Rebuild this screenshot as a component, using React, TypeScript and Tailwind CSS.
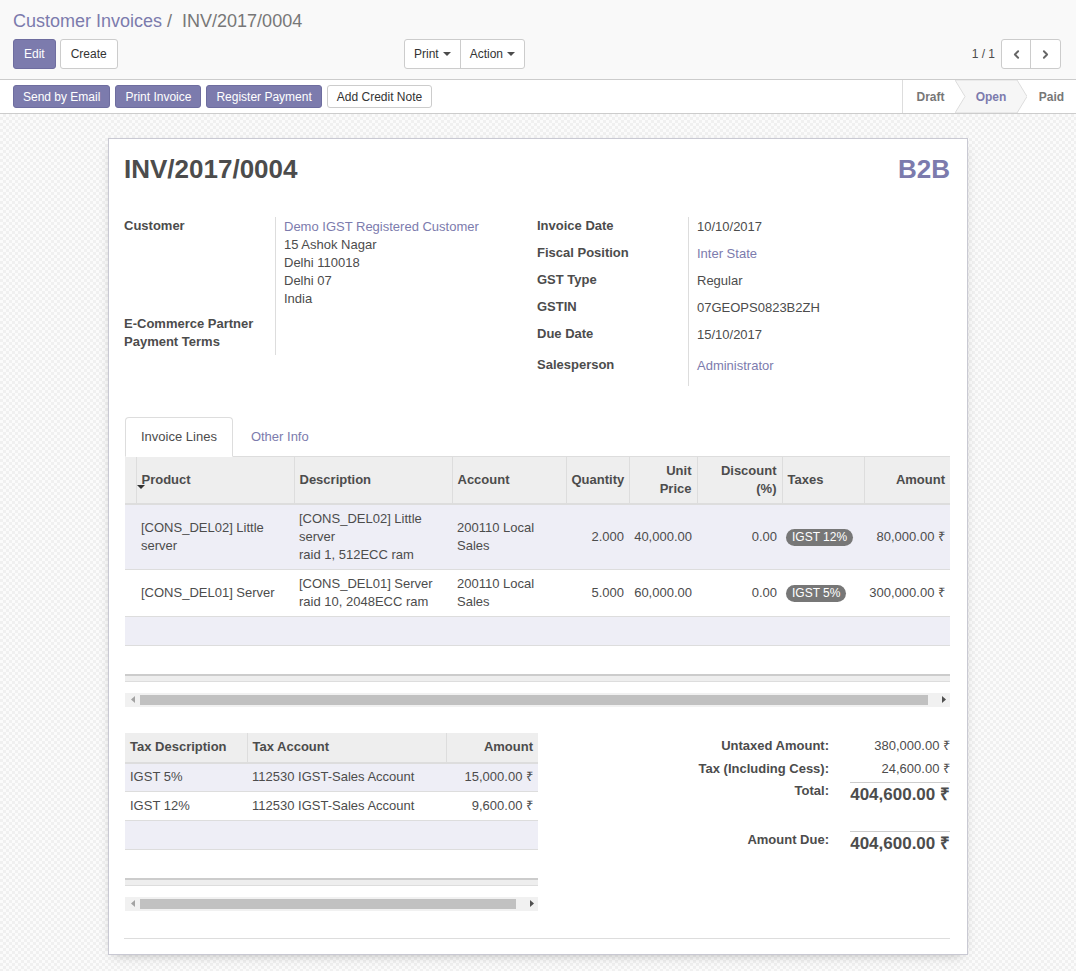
import { ChevronLeft, ChevronRight } from "lucide-react";

interface InvoiceLine {
  product: string[];
  description: string[];
  account: string[];
  quantity: string;
  price: string;
  discount: string;
  tax: string;
  amount: string;
}

const invoiceLines: InvoiceLine[] = [
  {
    product: ["[CONS_DEL02] Little", "server"],
    description: ["[CONS_DEL02] Little", "server", "raid 1, 512ECC ram"],
    account: ["200110 Local", "Sales"],
    quantity: "2.000",
    price: "40,000.00",
    discount: "0.00",
    tax: "IGST 12%",
    amount: "80,000.00 ₹",
  },
  {
    product: ["[CONS_DEL01] Server"],
    description: ["[CONS_DEL01] Server", "raid 10, 2048ECC ram"],
    account: ["200110 Local", "Sales"],
    quantity: "5.000",
    price: "60,000.00",
    discount: "0.00",
    tax: "IGST 5%",
    amount: "300,000.00 ₹",
  },
];

const taxLines = [
  { name: "IGST 5%", account: "112530 IGST-Sales Account", amount: "15,000.00 ₹" },
  { name: "IGST 12%", account: "112530 IGST-Sales Account", amount: "9,600.00 ₹" },
];

const Lines = ({ items }: { items: string[] }) => (
  <>
    {items.map((t, i) => (
      <div key={i}>{t}</div>
    ))}
  </>
);

const Caret = () => (
  <svg width="8" height="4" viewBox="0 0 8 4" className="ml-[4px] inline-block">
    <path d="M0 0 L8 0 L4 4 Z" fill="#4c4c4c" />
  </svg>
);

const Scrollbar = () => (
  <div className="h-[14px] bg-[#f1f1f1] flex items-center">
    <div className="w-[15px] flex justify-center">
      <svg width="4" height="7" viewBox="0 0 4 7">
        <path d="M4 0 L0 3.5 L4 7 Z" fill="#a3a3a3" />
      </svg>
    </div>
    <div className="flex-1 h-[10px] bg-[#c1c1c1]" />
    <div className="w-[22px] flex justify-end pr-[4px]">
      <svg width="4" height="7" viewBox="0 0 4 7">
        <path d="M0 0 L4 3.5 L0 7 Z" fill="#505050" />
      </svg>
    </div>
  </div>
);

const TableFoot = () => (
  <div className="h-[8px] bg-[#eeeeee] border-t-2 border-[#cccccc] border-b border-b-[#dddddd]" />
);

const App = () => {
  return (
    <div className="min-h-screen font-['Liberation_Sans',Arial,sans-serif] text-[13px] text-[#4c4c4c] bg-[repeating-conic-gradient(#f0f0f0_0%_25%,#fbfbfb_0%_50%)] bg-[length:6px_6px]">
      {/* control panel */}
      <div className="bg-[#f9f9f9] border-b border-[#cccccc] pl-[13px] pr-[15px] pt-[9px] pb-[10px]">
        <div className="text-[18px] leading-[24px]">
          <span className="text-[#7c7bad]">Customer Invoices</span>
          <span className="text-[#777777]"> /&nbsp; INV/2017/0004</span>
        </div>
        <div className="mt-[6px] flex items-center h-[30px]">
          <div className="w-[391px] flex gap-[4px]">
            <button className="h-[30px] px-[10px] bg-[#7c7bad] border border-[#6e6d9f] text-white text-[12px] rounded-[3px]">Edit</button>
            <button className="h-[30px] px-[10px] bg-white border border-[#cccccc] text-[#333333] text-[12px] rounded-[3px]">Create</button>
          </div>
          <div className="flex h-[30px] border border-[#cccccc] rounded-[3px] bg-white text-[12px] text-[#333333]">
            <button className="px-[9px] flex items-center border-r border-[#cccccc]">
              Print
              <Caret />
            </button>
            <button className="px-[9px] flex items-center">
              Action
              <Caret />
            </button>
          </div>
          <div className="ml-auto flex items-center">
            <span className="text-[12px] text-[#4c4c4c] mr-[6px]">1 / 1</span>
            <div className="flex h-[30px] border border-[#cccccc] rounded-[3px] bg-white">
              <button className="w-[29px] flex items-center justify-center border-r border-[#cccccc]">
                <ChevronLeft size={13} strokeWidth={3.5} color="#666666" />
              </button>
              <button className="w-[29px] flex items-center justify-center">
                <ChevronRight size={13} strokeWidth={3.5} color="#666666" />
              </button>
            </div>
          </div>
        </div>
      </div>

      {/* status bar */}
      <div className="bg-white border-b border-[#cccccc] h-[34px] flex items-center pl-[13px]">
        <div className="flex gap-[5px] text-[12px]">
          <button className="h-[23px] px-[9px] bg-[#7c7bad] border border-[#6e6d9f] text-white rounded-[3px]">Send by Email</button>
          <button className="h-[23px] px-[9px] bg-[#7c7bad] border border-[#6e6d9f] text-white rounded-[3px]">Print Invoice</button>
          <button className="h-[23px] px-[9px] bg-[#7c7bad] border border-[#6e6d9f] text-white rounded-[3px]">Register Payment</button>
          <button className="h-[23px] px-[9px] bg-white border border-[#cccccc] text-[#333333] rounded-[3px]">Add Credit Note</button>
        </div>
        <div className="ml-auto flex h-full border-l border-[#dddddd] text-[12px] font-bold">
          <div className="w-[52px] flex items-center justify-center pl-[3px] text-[#777777]">Draft</div>
          <div className="w-[72px] relative flex items-center justify-center text-[#7c7bad]">
            <svg width="72" height="33" viewBox="0 0 72 33" className="absolute left-0 top-0">
              <path d="M0 0 L62 0 L72 16.5 L62 33 L0 33 L10 16.5 Z" fill="#f6f6f6" stroke="#dddddd" strokeWidth="1" />
            </svg>
            <span className="relative">Open</span>
          </div>
          <div className="w-[49px] flex items-center justify-center text-[#777777]">Paid</div>
        </div>
      </div>

      {/* sheet */}
      <div className="pt-[24px] pb-[18px]">
        <div className="mx-auto w-[860px] bg-white border border-[#c9c9d3] shadow-[0_4px_12px_-6px_rgba(0,0,0,0.35)] pl-[15px] pr-[17px] pt-[15px] pb-[15px]">
          <div className="flex items-center justify-between">
            <h1 className="text-[26px] leading-[31px] font-bold text-[#4c4c4c]">INV/2017/0004</h1>
            <div className="text-[26px] leading-[31px] font-bold text-[#7c7bad]">B2B</div>
          </div>

          {/* groups */}
          <div className="mt-[32px] grid grid-cols-2 leading-[18px]">
            <div className="grid grid-cols-[151px_1fr] self-start">
              <div className="font-bold pb-[8px]">Customer</div>
              <div className="border-l border-[#dddddd] pl-[8px] pt-[1px] pb-[7px]">
                <div className="text-[#7c7bad]">Demo IGST Registered Customer</div>
                <div>15 Ashok Nagar</div>
                <div>Delhi 110018</div>
                <div>Delhi 07</div>
                <div>India</div>
              </div>
              <div className="font-bold">E-Commerce Partner</div>
              <div className="border-l border-[#dddddd]" />
              <div className="font-bold">Payment Terms</div>
              <div className="border-l border-[#dddddd]" />
              <div className="h-[4px]" />
              <div className="border-l border-[#dddddd]" />
            </div>
            <div className="grid grid-cols-[151px_1fr] self-start">
              <div className="font-bold h-[27px]">Invoice Date</div>
              <div className="border-l border-[#dddddd] pl-[8px] pt-[1px]">10/10/2017</div>
              <div className="font-bold h-[27px]">Fiscal Position</div>
              <div className="border-l border-[#dddddd] pl-[8px] pt-[1px] text-[#7c7bad]">Inter State</div>
              <div className="font-bold h-[27px]">GST Type</div>
              <div className="border-l border-[#dddddd] pl-[8px] pt-[1px]">Regular</div>
              <div className="font-bold h-[27px]">GSTIN</div>
              <div className="border-l border-[#dddddd] pl-[8px] pt-[1px]">07GEOPS0823B2ZH</div>
              <div className="font-bold h-[31px]">Due Date</div>
              <div className="border-l border-[#dddddd] pl-[8px] pt-[1px]">15/10/2017</div>
              <div className="font-bold h-[30px]">Salesperson</div>
              <div className="border-l border-[#dddddd] pl-[8px] pt-[1px] text-[#7c7bad]">Administrator</div>
            </div>
          </div>

          {/* tabs */}
          <div className="mt-[31px] ml-[1px] flex border-b border-[#dddddd] h-[40px]">
            <div className="px-[15px] flex items-center border border-[#dddddd] border-b-white rounded-t-[4px] bg-white -mb-[1px]">
              Invoice Lines
            </div>
            <div className="ml-[3px] px-[15px] flex items-center text-[#7c7bad]">Other Info</div>
          </div>

          {/* invoice lines */}
          <div className="ml-[1px]">
            <table className="w-full table-fixed border-collapse leading-[18px]">
              <colgroup>
                <col className="w-[11px]" />
                <col className="w-[158px]" />
                <col className="w-[158px]" />
                <col className="w-[114px]" />
                <col className="w-[63px]" />
                <col className="w-[68px]" />
                <col className="w-[85px]" />
                <col className="w-[82px]" />
                <col className="w-[86px]" />
              </colgroup>
              <thead>
                <tr className="bg-[#eeeeee] h-[47px] border-b-2 border-[#dddddd] font-bold">
                  <th className="border-r border-[#dddddd]" />
                  <th className="text-left px-[5px] border-r border-[#dddddd]">
                    <span className="relative">
                      <svg width="8" height="4" viewBox="0 0 8 4" className="absolute -left-[5px] top-[13px]">
                        <path d="M0 0 L8 0 L4 4 Z" fill="#333333" />
                      </svg>
                      Product
                    </span>
                  </th>
                  <th className="text-left px-[5px] border-r border-[#dddddd]">Description</th>
                  <th className="text-left px-[5px] border-r border-[#dddddd]">Account</th>
                  <th className="text-right px-[5px] border-r border-[#dddddd]">Quantity</th>
                  <th className="text-right px-[5px] border-r border-[#dddddd]">
                    Unit
                    <br />
                    Price
                  </th>
                  <th className="text-right px-[5px] border-r border-[#dddddd]">
                    Discount
                    <br />
                    (%)
                  </th>
                  <th className="text-left px-[5px] border-r border-[#dddddd]">Taxes</th>
                  <th className="text-right px-[5px]">Amount</th>
                </tr>
              </thead>
              <tbody>
                {invoiceLines.map((line, i) => (
                  <tr key={i} className={i === 0 ? "bg-[#eeeef6] border-b border-[#dddddd]" : "bg-white border-b border-[#dddddd]"}>
                    <td />
                    <td className="px-[5px] py-[5px] align-middle">
                      <Lines items={line.product} />
                    </td>
                    <td className="px-[5px] py-[5px] align-middle">
                      <Lines items={line.description} />
                    </td>
                    <td className="px-[5px] py-[5px] align-middle">
                      <Lines items={line.account} />
                    </td>
                    <td className="px-[5px] py-[5px] text-right">{line.quantity}</td>
                    <td className="px-[5px] py-[5px] text-right">{line.price}</td>
                    <td className="px-[5px] py-[5px] text-right">{line.discount}</td>
                    <td className="pl-[4px] pr-[5px] py-[5px]">
                      <span className="inline-block bg-[#777777] text-white text-[12px] leading-[17px] px-[6px] rounded-full">{line.tax}</span>
                    </td>
                    <td className="px-[5px] py-[5px] text-right whitespace-nowrap">{line.amount}</td>
                  </tr>
                ))}
                <tr className="bg-[#eeeef6] border-b border-[#dddddd] h-[29px]">
                  <td colSpan={9} />
                </tr>
                <tr className="bg-white h-[28px]">
                  <td colSpan={9} />
                </tr>
              </tbody>
            </table>
            <TableFoot />
            <div className="mt-[11px]">
              <Scrollbar />
            </div>
          </div>

          {/* tax lines and totals */}
          <div className="mt-[26px] ml-[1px] flex">
            <div className="w-[413px]">
              <table className="w-full table-fixed border-collapse leading-[18px]">
                <colgroup>
                  <col className="w-[122px]" />
                  <col className="w-[199px]" />
                  <col className="w-[92px]" />
                </colgroup>
                <thead>
                  <tr className="bg-[#eeeeee] h-[30px] border-b-2 border-[#dddddd] font-bold">
                    <th className="text-left px-[5px] border-r border-[#dddddd]">Tax Description</th>
                    <th className="text-left px-[5px] border-r border-[#dddddd]">Tax Account</th>
                    <th className="text-right px-[5px]">Amount</th>
                  </tr>
                </thead>
                <tbody>
                  {taxLines.map((t, i) => (
                    <tr key={t.name} className={i === 0 ? "bg-[#eeeef6] border-b border-[#dddddd] h-[29px]" : "bg-white border-b border-[#dddddd] h-[29px]"}>
                      <td className="px-[5px]">{t.name}</td>
                      <td className="px-[5px]">{t.account}</td>
                      <td className="px-[5px] text-right whitespace-nowrap">{t.amount}</td>
                    </tr>
                  ))}
                  <tr className="bg-[#eeeef6] border-b border-[#dddddd] h-[29px]">
                    <td colSpan={3} />
                  </tr>
                  <tr className="bg-white h-[28px]">
                    <td colSpan={3} />
                  </tr>
                </tbody>
              </table>
              <TableFoot />
              <div className="mt-[11px]">
                <Scrollbar />
              </div>
            </div>
            <div className="flex-1 flex justify-end">
              <div className="grid grid-cols-[auto_100px] gap-x-[21px] pt-[1px] self-start">
                <div className="text-right font-bold leading-[23px]">Untaxed Amount:</div>
                <div className="text-right leading-[23px]">380,000.00 ₹</div>
                <div className="text-right font-bold leading-[23px]">Tax (Including Cess):</div>
                <div className="text-right leading-[23px]">24,600.00 ₹</div>
                <div className="text-right font-bold leading-[18px] pt-[2px]">Total:</div>
                <div className="text-right font-bold text-[17px] leading-[24px] border-t border-[#cccccc] mt-[2px] whitespace-nowrap">404,600.00 ₹</div>
                <div className="h-[24px]" />
                <div className="h-[24px]" />
                <div className="text-right font-bold leading-[18px]">Amount Due:</div>
                <div className="text-right font-bold text-[17px] leading-[24px] border-t border-[#cccccc] whitespace-nowrap">404,600.00 ₹</div>
              </div>
            </div>
          </div>

          <div className="mt-[27px] border-t border-[#dddddd]" />
        </div>
      </div>
    </div>
  );
};

export default App;
